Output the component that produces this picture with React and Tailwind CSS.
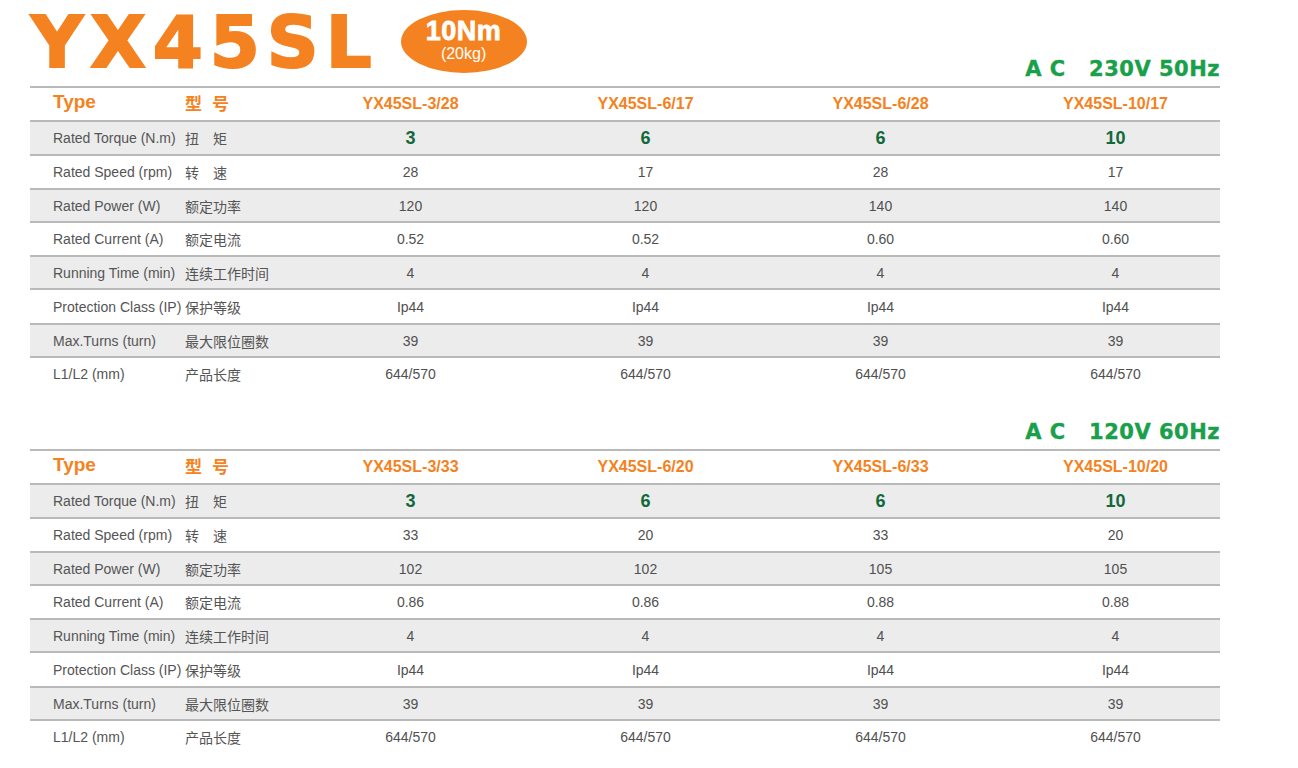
import React from "react";

const rows1 = [
  ["Rated Torque (N.m)", "扭　矩", ["3", "6", "6", "10"]],
  ["Rated Speed (rpm)", "转　速", ["28", "17", "28", "17"]],
  ["Rated Power (W)", "额定功率", ["120", "120", "140", "140"]],
  ["Rated Current (A)", "额定电流", ["0.52", "0.52", "0.60", "0.60"]],
  ["Running Time (min)", "连续工作时间", ["4", "4", "4", "4"]],
  ["Protection Class (IP)", "保护等级", ["Ip44", "Ip44", "Ip44", "Ip44"]],
  ["Max.Turns (turn)", "最大限位圈数", ["39", "39", "39", "39"]],
  ["L1/L2 (mm)", "产品长度", ["644/570", "644/570", "644/570", "644/570"]],
];

const rows2 = [
  ["Rated Torque (N.m)", "扭　矩", ["3", "6", "6", "10"]],
  ["Rated Speed (rpm)", "转　速", ["33", "20", "33", "20"]],
  ["Rated Power (W)", "额定功率", ["102", "102", "105", "105"]],
  ["Rated Current (A)", "额定电流", ["0.86", "0.86", "0.88", "0.88"]],
  ["Running Time (min)", "连续工作时间", ["4", "4", "4", "4"]],
  ["Protection Class (IP)", "保护等级", ["Ip44", "Ip44", "Ip44", "Ip44"]],
  ["Max.Turns (turn)", "最大限位圈数", ["39", "39", "39", "39"]],
  ["L1/L2 (mm)", "产品长度", ["644/570", "644/570", "644/570", "644/570"]],
];

const rowHeights = [
  "h-[34px]",
  "h-[34px]",
  "h-[34px]",
  "h-[33px]",
  "h-[34px]",
  "h-[33px]",
  "h-[35px]",
  "h-[33px]",
];

const sans = "font-['Liberation_Sans','Noto_Sans_CJK_SC',sans-serif]";
const cjk = "font-['Noto_Sans_CJK_SC','Liberation_Sans',sans-serif]";
const cols = "grid grid-cols-[155px_108px_235px_235px_235px_222px] items-center";

function Table({ models, rows }) {
  return (
    <div className="w-[1190px]">
      <div className={`${cols} h-[34px] border-t-2 border-[#b9b9b9]`}>
        <div className={`${sans} pl-[23px] text-[19px] font-bold text-[#f58220] leading-none -mt-[5px]`}>Type</div>
        <div className={`${cjk} text-[17px] font-bold text-[#f58220] leading-none -mt-[3px]`}>
          型<span className="ml-[10px]">号</span>
        </div>
        {models.map((m, i) => (
          <div
            key={m}
            className={`${sans} text-center text-[16px] font-bold text-[#f58220] leading-none ${i === 3 ? "pl-[13px]" : ""}`}
          >
            {m}
          </div>
        ))}
      </div>
      {rows.map(([en, zh, vals], r) => (
        <div
          key={en}
          className={`${cols} ${r < rowHeights.length - 1 ? rowHeights[r + 1] : "h-[34px]"} border-t-2 border-[#b9b9b9] ${
            r % 2 === 0 ? "bg-[#ececec]" : "bg-white"
          }`}
        >
          <div className={`${sans} pl-[23px] text-[14px] text-[#555555] leading-none whitespace-nowrap`}>{en}</div>
          <div className={`${cjk} text-[14px] text-[#555555] leading-none whitespace-nowrap`}>{zh}</div>
          {vals.map((v, i) =>
            r === 0 ? (
              <div
                key={i}
                className={`${sans} text-center text-[18px] font-bold text-[#12693a] leading-none ${i === 3 ? "pl-[13px]" : ""}`}
              >
                {v}
              </div>
            ) : (
              <div
                key={i}
                className={`${sans} text-center text-[14px] text-[#505050] leading-none ${i === 3 ? "pl-[13px]" : ""}`}
              >
                {v}
              </div>
            )
          )}
        </div>
      ))}
    </div>
  );
}

function Voltage({ children }) {
  return (
    <div className="font-['DejaVu_Sans',sans-serif] font-bold text-[21px] text-[#1aa04a] leading-none tracking-[0.5px] whitespace-pre [-webkit-text-stroke:0.4px_#1aa04a]">
      {children}
    </div>
  );
}

export default function App() {
  return (
    <div className="w-[1298px] h-[768px] bg-white pl-[30px] overflow-hidden">
      <div className="w-[1190px] h-[86px] flex items-end justify-between">
        <div className="flex items-start self-start h-[86px]">
          <div className="font-['DejaVu_Sans',sans-serif] font-bold text-[72px] leading-[86px] h-[86px] text-[#f58220] tracking-[7px] -mt-[1px] ml-[1px] [-webkit-text-stroke:2px_#f58220]">
            YX45SL
          </div>
          <div className="ml-[22px] mt-[10px] w-[126px] h-[63px] rounded-[50%] bg-[#f58220] flex flex-col items-center justify-center text-white font-['Liberation_Sans',sans-serif]">
            <div className="text-[27px] font-bold leading-none -mt-[3px] tracking-[0.5px] [-webkit-text-stroke:0.8px_#ffffff]">10Nm</div>
            <div className="text-[16px] leading-none mt-[1px]">(20kg)</div>
          </div>
        </div>
        <div className="mb-[6px]">
          <Voltage>{"A C   230V 50Hz"}</Voltage>
        </div>
      </div>
      <Table models={["YX45SL-3/28", "YX45SL-6/17", "YX45SL-6/28", "YX45SL-10/17"]} rows={rows1} />
      <div className="w-[1190px] h-[59px] flex items-end justify-end">
        <div className="mb-[6px]">
          <Voltage>{"A C   120V 60Hz"}</Voltage>
        </div>
      </div>
      <Table models={["YX45SL-3/33", "YX45SL-6/20", "YX45SL-6/33", "YX45SL-10/20"]} rows={rows2} />
    </div>
  );
}
